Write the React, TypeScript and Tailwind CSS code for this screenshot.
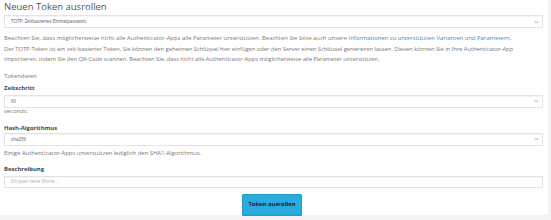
import React from "react";

const Chevron: React.FC = () => (
    <svg width="5" height="4" viewBox="0 0 10 8" className="absolute right-[3px] top-1/2 -translate-y-1/2">
        <path d="M1 2 L5 6 L9 2" fill="none" stroke="#888" strokeWidth="1.4" />
    </svg>
);

const SelectBox: React.FC<{ value: string }> = ({ value }) => (
    <div className="relative w-[539px] h-[13px] border border-[#e4e4e4] bg-white shadow-[inset_0_1px_1px_rgba(0,0,0,0.05)] flex items-center pl-[6px] text-[4.5px] text-[#555]">
        {value}
        <Chevron />
    </div>
);

export default function App() {
    return (
        <div className="w-[551px] h-[220px] bg-[#f3f3f3] overflow-hidden" style={{ fontFamily: '"Open Sans", "Liberation Sans", sans-serif' }}>
            <div className="w-[548px] h-[215px] bg-white pl-[4px] text-[#777]">
                <h3 className="text-[9.5px] leading-[12px] pt-[1px] text-[#555]">Neuen Token ausrollen</h3>
                <div className="mt-[2px]">
                    <SelectBox value="TOTP: Zeitbasiertes Einmalpasswort." />
                </div>
                <div className="mt-[5px] text-[5.9px] leading-[10.5px] text-[#7a7a7a]">
                    <p>
                        Beachten Sie, dass möglicherweise nicht alle Authenticator-Apps alle Parameter unterstützen. Beachten Sie bitte auch unsere{" "}
                        <span className="text-[#2a8fd0]">Informationen zu unterstützten Varianten und Parametern</span>.
                    </p>
                    <p className="tracking-[-0.07px]">
                        Der TOTP-Token ist ein zeit-basierter Token. Sie können den geheimen Schlüssel hier einfügen oder den Server einen Schlüssel generieren lassen. Diesen können Sie in Ihre Authenticator-App
                        <br />
                        importieren, indem Sie den QR-Code scannen. Beachten Sie, dass nicht alle Authenticator-Apps möglicherweise alle Parameter unterstützen.
                    </p>
                </div>
                <div className="mt-[7px] text-[5.9px] leading-[8px] text-[#7a7a7a]">Tokendaten</div>
                <div className="mt-[4px] text-[5.9px] leading-[8px] font-bold text-[#444]">Zeitschritt</div>
                <div className="mt-[3px]">
                    <SelectBox value="60" />
                </div>
                <div className="mt-0 text-[5.9px] leading-[7px]">seconds.</div>
                <div className="mt-[9px] text-[5.9px] leading-[8px] font-bold text-[#444]">Hash-Algorithmus</div>
                <div className="mt-[1px]">
                    <SelectBox value="sha256" />
                </div>
                <div className="mt-[3px] text-[5.9px] leading-[8px]">Einige Authenticator-Apps unterstützen lediglich den SHA1-Algorithmus.</div>
                <div className="mt-[8px] text-[5.9px] leading-[8px] font-bold text-[#444]">Beschreibung</div>
                <div className="mt-[3px] w-[539px] h-[12px] border border-[#e4e4e4] shadow-[inset_0_1px_1px_rgba(0,0,0,0.05)] flex items-center pl-[6px] text-[4.5px] text-[#aaa]">
                    Ein paar nette Worte...
                </div>
                <div className="flex justify-center mt-[6px] pr-[8px]">
                    <button className="w-[60px] h-[22px] bg-[#29abe0] border border-[#1f9bd0] rounded-[1px] text-[5.9px] font-bold text-[#222]">
                        Token ausrollen
                    </button>
                </div>
            </div>
        </div>
    );
}
